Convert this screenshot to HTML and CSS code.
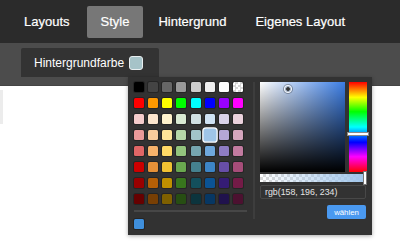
FILE: index.html
```html
<!DOCTYPE html>
<html lang="de">
<head>
    <meta charset="UTF-8">
    <meta name="viewport" content="width=device-width, initial-scale=1.0">
    <title>Style</title>
    <link rel="stylesheet" href="styles.css">
</head>
<body>
    <div class="page">
        <div class="topbar">
            <a class="nav-item">Layouts</a>
            <a class="nav-item active">Style</a>
            <a class="nav-item">Hintergrund</a>
            <a class="nav-item">Eigenes Layout</a>
        </div>
        <div class="subbar">
            <div class="sub-tab">Hintergrundfarbe <span class="color-chip"></span></div>
        </div>
        <div class="content">
            <div class="edge-tab"></div>
        </div>

        <!-- color picker dropdown -->
        <div class="picker">
            <div class="picker-palette">
                <div class="palette-grid">
                    <span class="swatch" style="background:#000000"></span>
                    <span class="swatch" style="background:#444444"></span>
                    <span class="swatch" style="background:#666666"></span>
                    <span class="swatch" style="background:#999999"></span>
                    <span class="swatch" style="background:#cccccc"></span>
                    <span class="swatch" style="background:#eeeeee"></span>
                    <span class="swatch" style="background:#ffffff"></span>
                    <span class="swatch swatch-empty"></span>

                    <span class="swatch" style="background:#ff0000"></span>
                    <span class="swatch" style="background:#ff9900"></span>
                    <span class="swatch" style="background:#ffff00"></span>
                    <span class="swatch" style="background:#00ff00"></span>
                    <span class="swatch" style="background:#00ffff"></span>
                    <span class="swatch" style="background:#0000ff"></span>
                    <span class="swatch" style="background:#9900ff"></span>
                    <span class="swatch" style="background:#ff00ff"></span>

                    <span class="swatch" style="background:#f4cccc"></span>
                    <span class="swatch" style="background:#fce5cd"></span>
                    <span class="swatch" style="background:#fff2cc"></span>
                    <span class="swatch" style="background:#d9ead3"></span>
                    <span class="swatch" style="background:#d0e0e3"></span>
                    <span class="swatch" style="background:#cfe2f3"></span>
                    <span class="swatch" style="background:#d9d2e9"></span>
                    <span class="swatch" style="background:#ead1dc"></span>

                    <span class="swatch" style="background:#ea9999"></span>
                    <span class="swatch" style="background:#f9cb9c"></span>
                    <span class="swatch" style="background:#ffe599"></span>
                    <span class="swatch" style="background:#b6d7a8"></span>
                    <span class="swatch" style="background:#a2c4c9"></span>
                    <span class="swatch selected" style="background:#9fc5e8"></span>
                    <span class="swatch" style="background:#b4a7d6"></span>
                    <span class="swatch" style="background:#d5a6bd"></span>

                    <span class="swatch" style="background:#e06666"></span>
                    <span class="swatch" style="background:#f6b26b"></span>
                    <span class="swatch" style="background:#ffd966"></span>
                    <span class="swatch" style="background:#93c47d"></span>
                    <span class="swatch" style="background:#76a5af"></span>
                    <span class="swatch" style="background:#6fa8dc"></span>
                    <span class="swatch" style="background:#8e7cc3"></span>
                    <span class="swatch" style="background:#c27ba0"></span>

                    <span class="swatch" style="background:#cc0000"></span>
                    <span class="swatch" style="background:#e69138"></span>
                    <span class="swatch" style="background:#f1c232"></span>
                    <span class="swatch" style="background:#6aa84f"></span>
                    <span class="swatch" style="background:#45818e"></span>
                    <span class="swatch" style="background:#3d85c6"></span>
                    <span class="swatch" style="background:#674ea7"></span>
                    <span class="swatch" style="background:#a64d79"></span>

                    <span class="swatch" style="background:#990000"></span>
                    <span class="swatch" style="background:#b45f06"></span>
                    <span class="swatch" style="background:#bf9000"></span>
                    <span class="swatch" style="background:#38761d"></span>
                    <span class="swatch" style="background:#134f5c"></span>
                    <span class="swatch" style="background:#0b5394"></span>
                    <span class="swatch" style="background:#351c75"></span>
                    <span class="swatch" style="background:#741b47"></span>

                    <span class="swatch" style="background:#660000"></span>
                    <span class="swatch" style="background:#783f04"></span>
                    <span class="swatch" style="background:#7f6000"></span>
                    <span class="swatch" style="background:#274e13"></span>
                    <span class="swatch" style="background:#0c343d"></span>
                    <span class="swatch" style="background:#073763"></span>
                    <span class="swatch" style="background:#20124d"></span>
                    <span class="swatch" style="background:#4c1130"></span>
                </div>
                <div class="palette-divider"></div>
                <div class="palette-recent">
                    <span class="swatch" style="background:#3f8fdc"></span>
                </div>
            </div>

            <div class="picker-main">
                <div class="picker-top">
                    <div class="sat-area">
                        <div class="sat-white"><div class="sat-black"></div></div>
                        <span class="sat-marker"></span>
                    </div>
                    <div class="hue-bar"><span class="hue-handle"></span></div>
                </div>
                <div class="alpha-bar">
                    <div class="alpha-fill"></div>
                    <span class="alpha-handle"></span>
                </div>
                <div class="color-input">rgb(158, 196, 234)</div>
                <div class="picker-actions">
                    <button class="choose-btn">wählen</button>
                </div>
            </div>
        </div>
    </div>
</body>
</html>
```

FILE: styles.css
```css
html, body {
    height: 100%;
}
body {
    font-family: "Liberation Sans", Arial, sans-serif;
    margin: 0;
    background-color: #ffffff;
}
.page {
    position: relative;
    min-height: 250px;
}

/* Top navigation */
.topbar {
    height: 43px;
    background-color: #2b2b2b;
    display: flex;
    align-items: center;
    padding-left: 10px;
    box-sizing: border-box;
}
.nav-item {
    color: #ffffff;
    font-size: 13px;
    height: 32px;
    line-height: 32px;
    padding: 0 14px;
    margin-right: 1px;
    border-radius: 2px;
    cursor: pointer;
    -webkit-text-stroke: 0.2px #ffffff;
}
.nav-item.active {
    background-color: #777777;
    margin-left: 2px;
}

/* Sub navigation */
.subbar {
    height: 43px;
    background-color: #4c4c4c;
    padding: 5px 0 0 21px;
    box-sizing: border-box;
    border-bottom: 1px solid #444;
}
.sub-tab {
    width: 138px;
    height: 29px;
    background-color: #333333;
    border-radius: 2px 2px 0 0;
    color: #ffffff;
    font-size: 12px;
    display: flex;
    align-items: center;
    padding-left: 13px;
    box-sizing: border-box;
    gap: 5px;
}
.color-chip {
    width: 14px;
    height: 14px;
    box-sizing: border-box;
    border: 1px solid #e8eef0;
    border-radius: 3px;
    background-color: #a6c3c8;
}

.content {
    padding-top: 4px;
}
.edge-tab {
    width: 3px;
    height: 34px;
    background-color: #ececec;
}

/* Color picker dropdown */
.picker {
    position: absolute;
    left: 128px;
    top: 77px;
    width: 244px;
    height: 158px;
    box-sizing: border-box;
    background-color: #323232;
    padding-top: 5px;
    display: flex;
    align-items: flex-start;
    box-shadow: 0 1px 4px rgba(0, 0, 0, 0.35);
}
.picker-palette {
    width: 113px;
    margin-left: 6px;
    margin-right: 6px;
}
.palette-grid {
    display: grid;
    grid-template-columns: repeat(8, 10px);
    column-gap: 4.14px;
    row-gap: 6px;
}
.swatch {
    display: block;
    width: 10px;
    height: 10px;
    border-radius: 1.5px;
    box-shadow: 0 0 0 1px rgba(0, 0, 0, 0.25);
}
.swatch-empty {
    background-color: #ffffff;
    background-image: conic-gradient(#d6d6d6 25%, #ffffff 0 50%, #d6d6d6 0 75%, #ffffff 0);
    background-size: 5px 5px;
}
.swatch.selected {
    transform: scale(1.3);
    border-radius: 2px;
    box-shadow: 0 0 0 1px #ffffff;
}
.palette-divider {
    height: 2px;
    background-color: #474747;
    margin: 6px 0 7px;
}

.picker-main {
    border-left: 2px solid #3d3d3d;
    padding-left: 5px;
    width: 107px;
}
.picker-top {
    display: flex;
    gap: 4px;
}
.sat-area {
    position: relative;
    width: 85px;
    height: 90px;
    background-color: #3b7de4;
}
.sat-white {
    height: 100%;
    background: linear-gradient(to right, #ffffff, rgba(255, 255, 255, 0));
}
.sat-black {
    height: 100%;
    background: linear-gradient(to top, #000000, rgba(0, 0, 0, 0));
}
.sat-marker {
    position: absolute;
    left: 24px;
    top: 3px;
    width: 6px;
    height: 6px;
    border: 1px solid #ffffff;
    border-radius: 50%;
    background: radial-gradient(circle, #333 0 1.5px, #8e9fb5 2px);
    box-shadow: 0 0 0 1px rgba(0, 0, 0, 0.3);
}
.hue-bar {
    position: relative;
    width: 18px;
    height: 90px;
    background: linear-gradient(to bottom, #ff0000, #ffff00 17%, #00ff00 33%, #00ffff 50%, #0000ff 67%, #ff00ff 83%, #ff0000);
}
.hue-handle {
    position: absolute;
    left: -2px;
    right: -2px;
    top: 50px;
    height: 2px;
    background-color: #ffffff;
    border: 1px solid #888;
}
.alpha-bar {
    position: relative;
    height: 8px;
    margin-top: 2px;
    background-color: #ffffff;
    background-image: conic-gradient(#d8d8d8 25%, #ffffff 0 50%, #d8d8d8 0 75%, #ffffff 0);
    background-size: 6px 6px;
}
.alpha-fill {
    height: 100%;
    background: linear-gradient(to right, rgba(158, 196, 234, 0), rgb(158, 196, 234));
}
.alpha-handle {
    position: absolute;
    right: 0;
    top: -3px;
    width: 2px;
    height: 12px;
    background-color: #ffffff;
    border: 1px solid #777;
}
.color-input {
    margin-top: 3px;
    height: 14px;
    box-sizing: border-box;
    border: 1px solid #484848;
    border-radius: 2px;
    color: #e6e6e6;
    font-size: 8.8px;
    line-height: 12px;
    padding-left: 4px;
    margin-right: 1px;
}
.picker-actions {
    display: flex;
    justify-content: flex-end;
    margin-top: 6px;
    padding-right: 1px;
}
.choose-btn {
    width: 39px;
    height: 14px;
    padding: 0;
    border: none;
    border-radius: 2px;
    background-color: #4a99f0;
    color: #ffffff;
    font-family: "Liberation Sans", Arial, sans-serif;
    font-size: 7.8px;
    cursor: pointer;
}
```
